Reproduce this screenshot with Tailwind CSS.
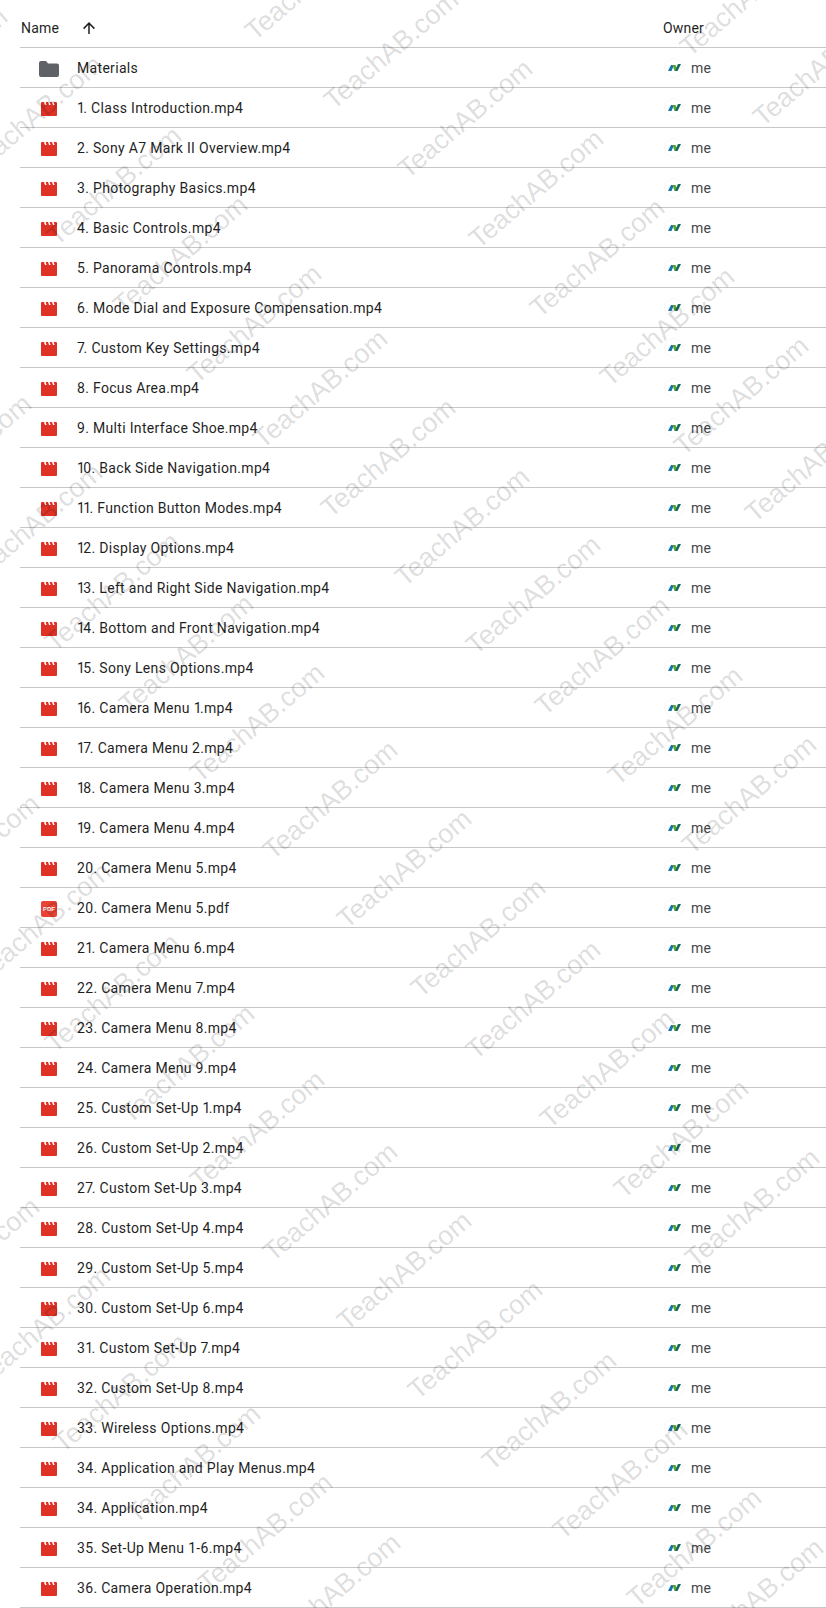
<!DOCTYPE html>
<html lang="en">
<head>
    <meta charset="UTF-8">
    <meta name="viewport" content="width=device-width, initial-scale=1.0">
    <title>Drive folder</title>
    <script src="https://cdn.jsdelivr.net/npm/@tailwindcss/browser@4"></script>
</head>
<body class="bg-white">
    <div class="relative h-[1608px] overflow-hidden pl-5 font-['Roboto',sans-serif] text-[14px] text-[#1f1f1f]">
        <div class="grid h-12 grid-cols-[644px_1fr] items-center border-b border-[#c7c7c7] pt-[10px] pb-px">
            <div class="flex items-center">
                <span class="pl-px tracking-[0.2px]">Name</span>
                <svg class="ml-[21px] h-[18px] w-[18px]" viewBox="0 0 24 24" fill="#1f1f1f"><path d="M13 20h-2V8l-5.5 5.5-1.42-1.42L12 4.16l7.92 7.92-1.42 1.42L13 8z"/></svg>
            </div>
            <div class="-ml-px tracking-[0.2px]">Owner</div>
        </div>
        <div id="rows"></div>
        <div id="marks" class="pointer-events-none absolute inset-0 overflow-hidden"></div>
    </div>

    <script>
        const folderIcon = `<svg class="h-4 w-5" viewBox="0 0 20 16" fill="#5f6368"><path d="M2 0h5l2 2.500h9a2 2 0 0 1 2 2V14a2 2 0 0 1-2 2H2a2 2 0 0 1-2-2V2a2 2 0 0 1 2-2z"/></svg>`;
        const videoIcon = `<svg class="h-[14px] w-4" viewBox="0 0 16 14"><path fill="#dd3225" d="M1 0h14a1 1 0 0 1 1 1v12a1 1 0 0 1-1 1H1a1 1 0 0 1-1-1V1a1 1 0 0 1 1-1z"/><path fill="#fff" d="M3 0h1.600l1 3H4zM7 0h1.600l1 3H8zM11 0h1.600l1 3H12z"/></svg>`;
        const pdfIcon = `<div class="flex h-4 w-4 items-center justify-center rounded-[2px] bg-[#ea4335] font-['Liberation_Sans',sans-serif] text-[6px] font-bold leading-none text-white">PDF</div>`;

        const files = [
            'Materials', '1. Class Introduction.mp4', '2. Sony A7 Mark II Overview.mp4', '3. Photography Basics.mp4',
            '4. Basic Controls.mp4', '5. Panorama Controls.mp4', '6. Mode Dial and Exposure Compensation.mp4',
            '7. Custom Key Settings.mp4', '8. Focus Area.mp4', '9. Multi Interface Shoe.mp4', '10. Back Side Navigation.mp4',
            '11. Function Button Modes.mp4', '12. Display Options.mp4', '13. Left and Right Side Navigation.mp4',
            '14. Bottom and Front Navigation.mp4', '15. Sony Lens Options.mp4', '16. Camera Menu 1.mp4', '17. Camera Menu 2.mp4',
            '18. Camera Menu 3.mp4', '19. Camera Menu 4.mp4', '20. Camera Menu 5.mp4', '20. Camera Menu 5.pdf',
            '21. Camera Menu 6.mp4', '22. Camera Menu 7.mp4', '23. Camera Menu 8.mp4', '24. Camera Menu 9.mp4',
            '25. Custom Set-Up 1.mp4', '26. Custom Set-Up 2.mp4', '27. Custom Set-Up 3.mp4', '28. Custom Set-Up 4.mp4',
            '29. Custom Set-Up 5.mp4', '30. Custom Set-Up 6.mp4', '31. Custom Set-Up 7.mp4', '32. Custom Set-Up 8.mp4',
            '33. Wireless Options.mp4', '34. Application and Play Menus.mp4', '34. Application.mp4', '35. Set-Up Menu 1-6.mp4',
            '36. Camera Operation.mp4'
        ];

        function iconFor(name) {
            if (name === 'Materials') return folderIcon;
            return name.endsWith('.pdf') ? pdfIcon : videoIcon;
        }

        // the reference font has narrow 1s and 7s, but A7 and 1-6 keep their normal gaps
        function fileLabel(name) {
            return name
                .replace(/1(?!-)/g, '<span class="tracking-[-1.6px]">1</span>')
                .replace(/(^|[^A])7/g, '$1<span class="tracking-[-1.3px]">7</span>');
        }

        document.getElementById('rows').innerHTML = files.map(name => `
            <div class="grid h-10 grid-cols-[644px_1fr] items-center border-b border-[#c7c7c7]">
                <div class="flex items-center pt-[2px]">
                    <div class="flex w-[57px] justify-center pl-px">${iconFor(name)}</div>
                    <span class="tracking-[0.32px]">${fileLabel(name)}</span>
                </div>
                <div class="flex items-center text-[#444746]">
                    <div class="flex h-5 w-5 items-center justify-center rounded-full border border-[#f7f7f7]">
                        <svg class="h-[7px] w-[13px]" viewBox="0 0 13 7"><path fill="#1a72b0" d="M0 7l3-6h3L3.500 7z"/><path fill="#5aa832" d="M4.500 1H7.500L9 4.500 7.500 7H6.500z"/><path fill="#17695c" d="M10 0h3L9.500 7H7z"/></svg>
                    </div>
                    <span class="ml-[7px] pt-[2px] tracking-[0.2px]">me</span>
                </div>
            </div>`).join('');

        // lower left corner of the T of every watermark
        const marks = [
            [245,36],[324,105],[398,174],[469,244],[530,313],[600,382],[674,451],[680,52],[753,122],[745,518],
            [-127,122],[-32,170],[47,241],[113,310],[187,379],[253,444],[321,513],[395,582],[466,650],[535,711],[608,781],[682,850],
            [-103,509],[-32,578],[45,647],[119,709],[190,778],[263,855],[337,924],[411,993],[466,1055],[540,1124],[614,1194],[685,1263],
            [-95,909],[-24,977],[45,1048],[120,1119],[190,1185],[263,1257],[337,1326],[408,1395],[482,1466],[553,1535],[627,1603],[689,1653],
            [-95,1312],[-24,1381],[53,1448],[126,1519],[198,1588],[266,1648]
        ];

        document.getElementById('marks').innerHTML = marks.map(([x, y]) =>
            `<div class="absolute origin-[0_22px] -rotate-[40.5deg] whitespace-nowrap font-['Liberation_Sans',sans-serif] text-[27px] leading-[28px] text-black/15" style="left:${x + 9}px;top:${y - 17}px">TeachAB.com</div>`
        ).join('');
    </script>
</body>
</html>
